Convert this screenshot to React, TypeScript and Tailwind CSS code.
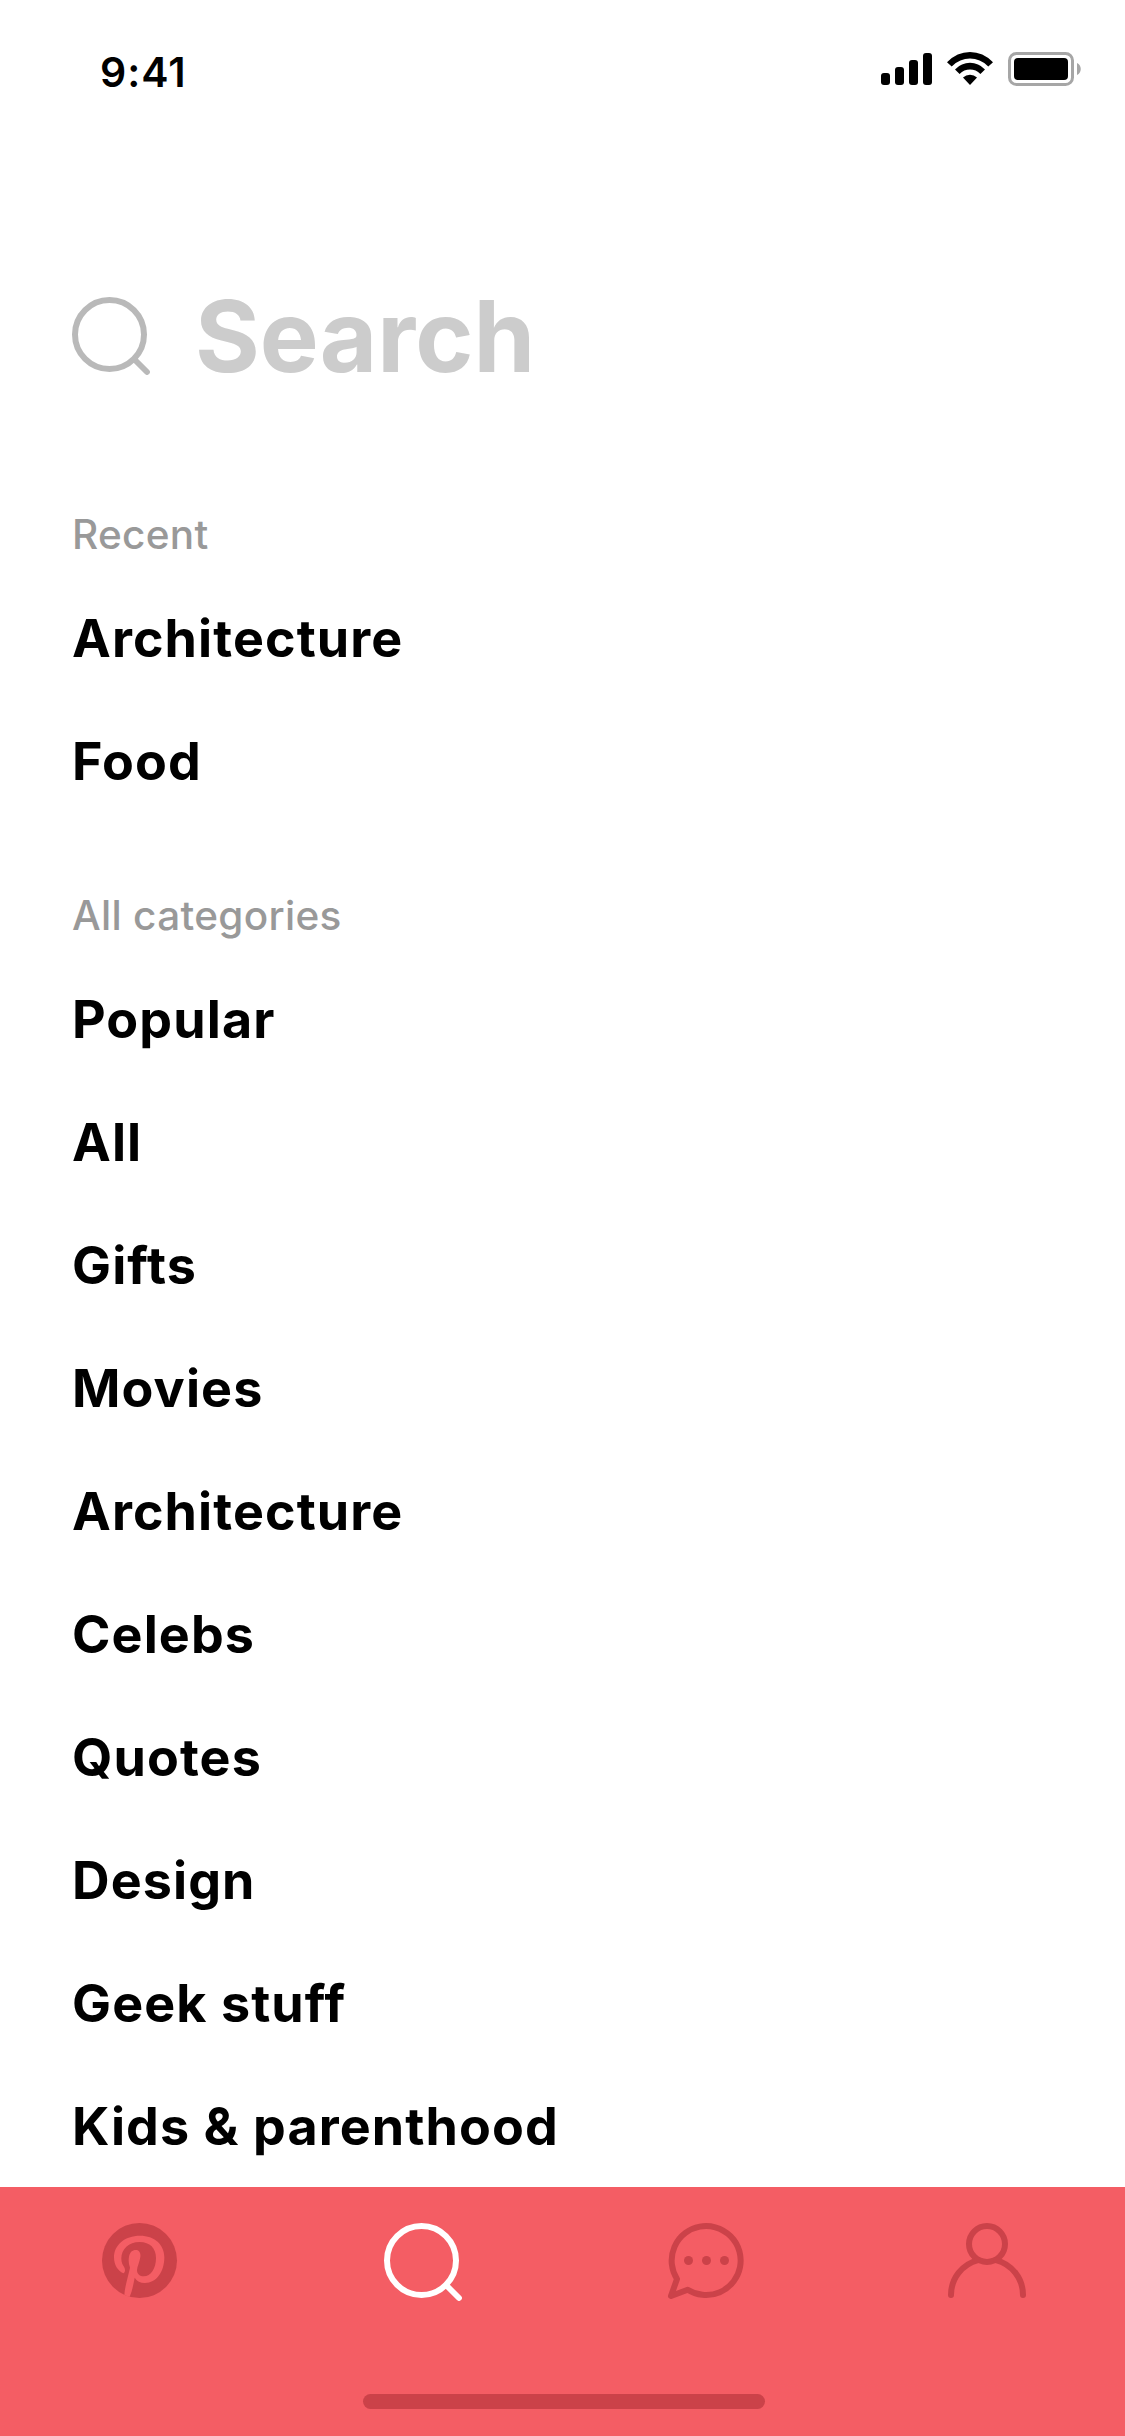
import { useState } from "react"
import type { ReactNode } from "react"

const recent = ["Architecture", "Food"]

const categories = [
  "Popular",
  "All",
  "Gifts",
  "Movies",
  "Architecture",
  "Celebs",
  "Quotes",
  "Design",
  "Geek stuff",
  "Kids & parenthood",
]

const SearchIcon = () => (
  <svg className="w-[78px] h-[78px]" viewBox="0 0 78 78" fill="none" stroke="currentColor">
    <circle cx="37.5" cy="37.5" r="34.5" strokeWidth="6" />
    <path d="M62.5 62.5L75 75" strokeWidth="5.8" strokeLinecap="round" />
  </svg>
)

const PinterestIcon = () => (
  <svg className="w-[78px] h-[78px]" viewBox="0 0 234 234">
    <circle cx="112.5" cy="112.5" r="112.5" fill="currentColor" />
    <path
      fill="#f45d64"
      d="M64 151C47 144 36 125 36 103C36 66 68 38 114 38C158 38 187 65 187 103C187 147 163 180 129 180C115 180 104 174 98 164C94 184 91 203 83 221L67 217C68 195 76 168 84 134C80 123 79 113 81 101C84 87 91 81 101 81C111 81 117 89 115 102C113 117 106 129 105 141C105 153 114 160 125 160C147 160 162 136 162 105C162 76 144 57 113 57C80 57 58 78 58 107C58 118 62 125 66 131C70 138 71 147 64 151Z"
    />
  </svg>
)

const ChatIcon = () => (
  <svg className="w-[78px] h-[78px]" viewBox="0 0 78 78" fill="none">
    <path
      d="M21.7 66.7A34.5 34.5 0 1 0 11 56L5 73Z"
      stroke="currentColor"
      strokeWidth="6"
      strokeLinejoin="round"
    />
    <g fill="currentColor">
      <circle cx="22.5" cy="37.5" r="4.5" />
      <circle cx="40.5" cy="37.5" r="4.5" />
      <circle cx="58.5" cy="37.5" r="4.5" />
    </g>
  </svg>
)

const UserIcon = () => (
  <svg
    className="w-[78px] h-[78px]"
    viewBox="0 0 78 78"
    fill="none"
    stroke="currentColor"
    strokeWidth="6"
    strokeLinecap="round"
  >
    <circle cx="39" cy="21" r="18" />
    <path d="M3 72A36 36 0 0 1 30 37.1M75 72A36 36 0 0 0 48 37.1" />
  </svg>
)

const StatusBar = () => (
  <div className="flex items-start justify-between h-[276px] pl-[100px] pr-[43px]">
    <span className="mt-12 text-[41px] leading-[48px] font-semibold tracking-[1px]">9:41</span>
    <div className="flex mt-[52px]">
      <svg className="w-[51px] h-[34px]" viewBox="0 0 51 34">
        <rect x="0" y="21" width="9" height="12" rx="3" />
        <rect x="14" y="15" width="9" height="18" rx="3" />
        <rect x="28" y="8" width="9" height="25" rx="3" />
        <rect x="42" y="1" width="9" height="32" rx="3" />
      </svg>
      <svg className="ml-[15px] w-[46px] h-[34px]" viewBox="0 0 46 34">
        <path d="M0 10.2Q10 0 23 0T46 10.2L41.3 14.4Q33 6.6 23 6.6T4.7 14.4Z" />
        <path d="M8 17.4Q14.5 10.8 23 10.8T38 17.4L33.4 22Q29 17.6 23 17.6T12.6 22Z" />
        <path d="M16 25.4Q19 22.7 23 22.7T30 25.4L23 33Z" />
      </svg>
      <svg className="ml-[15px] w-[74px] h-[34px]" viewBox="0 0 74 34">
        <rect x="1.5" y="1.5" width="63" height="31" rx="7" fill="none" stroke="#a6a6a6" strokeWidth="3" />
        <rect x="6" y="6" width="54" height="22" rx="4" />
        <path d="M69 11C74 13 74 21 69 23Z" fill="#a6a6a6" />
      </svg>
    </div>
  </div>
)

const Section = ({ title, items }: { title: string; items: string[] }) => (
  <section>
    <h2 className="text-[40.5px] leading-[48px] font-medium tracking-[0.3px] text-[#999999]">{title}</h2>
    <ul className="mt-[18px]">
      {items.map((item) => (
        <li key={item} className="text-[52px] leading-[123px] font-bold tracking-[1.1px] whitespace-nowrap">
          {item}
        </li>
      ))}
    </ul>
  </section>
)

const tabs: { name: string; icon: ReactNode }[] = [
  { name: "home", icon: <PinterestIcon /> },
  { name: "search", icon: <SearchIcon /> },
  { name: "messages", icon: <ChatIcon /> },
  { name: "profile", icon: <UserIcon /> },
]

const TabBar = () => {
  const [activeTab, setActiveTab] = useState("search")

  return (
    <nav className="shrink-0 h-[249px] flex flex-col bg-[#f45d64]">
      <div className="flex gap-[204px] pl-[102px] pt-9">
        {tabs.map((tab) => (
          <button
            key={tab.name}
            aria-label={tab.name}
            className={activeTab === tab.name ? "text-white" : "text-[#cb4249]"}
            onClick={() => setActiveTab(tab.name)}
          >
            {tab.icon}
          </button>
        ))}
      </div>
      <div className="mt-[93px] ml-[363px] w-[402px] h-[15px] rounded-full bg-[#cb4249]" />
    </nav>
  )
}

export default function App() {
  return (
    <div className="w-[1125px] h-[2436px] flex flex-col overflow-hidden bg-white text-black font-['Inter',sans-serif]">
      <main className="flex-1 min-h-0 overflow-hidden">
        <StatusBar />
        <div className="flex items-start pl-[72px] h-[235px]">
          <div className="mt-[21px] text-[#b9b9b9]">
            <SearchIcon />
          </div>
          <span className="ml-[45px] text-[99px] leading-[120px] font-bold text-[#cccccc]">Search</span>
        </div>
        <div className="flex flex-col gap-[69px] pl-[72px]">
          <Section title="Recent" items={recent} />
          <Section title="All categories" items={categories} />
        </div>
      </main>
      <TabBar />
    </div>
  )
}
